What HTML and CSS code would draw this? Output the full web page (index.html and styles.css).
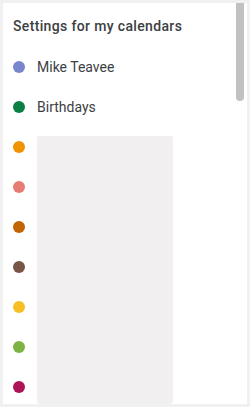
FILE: index.html
```html
<!DOCTYPE html>
<html>
	<head>
		<meta charset="utf-8">
		<title>Settings for my calendars</title>
		<link rel="stylesheet" href="styles.css">
	</head>
	<body>
		<div class="panel">
			<h2 class="title">Settings for my calendars</h2>
			<ul class="list">
				<li class="item"><span class="dot lavender"></span><span class="name">Mike Teavee</span></li>
				<li class="item"><span class="dot basil"></span><span class="name">Birthdays</span></li>
				<li class="item"><span class="dot mango"></span></li>
				<li class="item"><span class="dot flamingo"></span></li>
				<li class="item"><span class="dot pumpkin"></span></li>
				<li class="item"><span class="dot cocoa"></span></li>
				<li class="item"><span class="dot banana"></span></li>
				<li class="item"><span class="dot avocado"></span></li>
				<li class="item"><span class="dot beetroot"></span></li>
				<li class="loading"></li>
			</ul>
			<div class="thumb"></div>
		</div>
	</body>
</html>
```

FILE: styles.css
```css
*{
	margin:0;
	padding:0;
	box-sizing:border-box;
}
html,body{
	height:100%;
}
body{
	background:#f1f1f1;
	padding:3px;
	font-family:Roboto,"Noto Sans",sans-serif;
	color:#3c4043;
}
ul{
	list-style:none;
}
.panel{
	position:relative;
	height:401px;
	background:#fff;
	overflow:hidden;
	padding:13px 0 0 10px;
}
.title{
	font-size:14px;
	font-weight:500;
	line-height:20px;
	letter-spacing:0.35px;
	color:#3c4043;
	margin-bottom:11px;
}
.list{
	display:grid;
	grid-template-columns:12px 136px;
	grid-auto-rows:40px;
	column-gap:12px;
}
.item{
	display:contents;
}
.dot{
	grid-column:1;
	align-self:center;
	width:12px;
	height:12px;
	border-radius:50%;
}
.name{
	grid-column:2;
	align-self:center;
	font-size:14px;
	line-height:20px;
	white-space:nowrap;
}
.loading{
	grid-column:2;
	grid-row:3 / 10;
	margin:9px 0 2px;
	background:#f1eff0;
	border-radius:2px 2px 5px 5px;
}
.lavender{ background:#7986cb; }
.basil{ background:#0b8043; }
.mango{ background:#f09300; }
.flamingo{ background:#e67c73; }
.pumpkin{ background:#c26401; }
.cocoa{ background:#795548; }
.banana{ background:#f6bf26; }
.avocado{ background:#7cb342; }
.beetroot{ background:#ad1457; }
.thumb{
	position:absolute;
	top:0;
	right:3px;
	width:8px;
	height:98px;
	background:#c1c1c1;
	border-radius:0 0 4px 4px;
}
```
